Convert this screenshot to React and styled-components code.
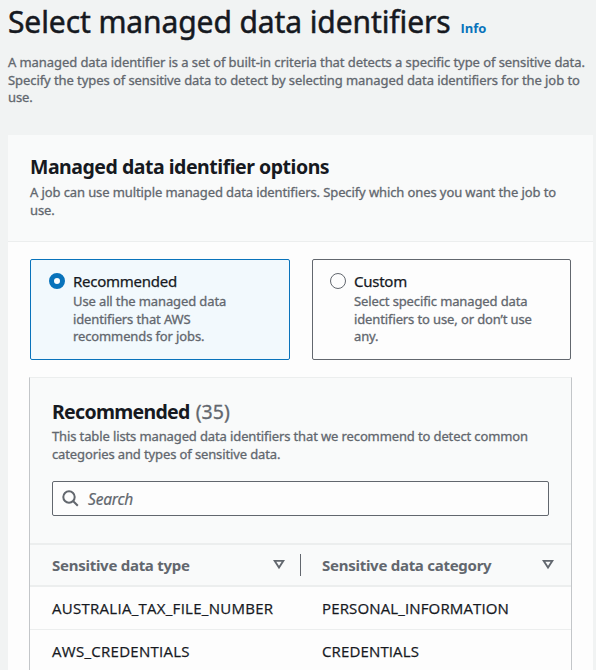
import React from "react";
import styled, { createGlobalStyle } from "styled-components";

const prose = '"Noto Sans", "Open Sans", sans-serif';
const caps = '"Open Sans", "Noto Sans", sans-serif';
const color = {
  page: "#f1f3f3",
  surface: "#fdfdfd",
  header: "#f9fafa",
  line: "#eceeee",
  edge: "#c3c6c9",
  ink: "#16191f",
  muted: "#62676e",
  blue: "#0973bb",
};

const GlobalStyle = createGlobalStyle`
  *, *::before, *::after { box-sizing: border-box; }
  html, body { margin: 0; background: ${color.page}; }
  body { font-family: ${prose}; color: ${color.ink}; overflow: hidden; }
  h1, h2, p { margin: 0; }
`;

const Page = styled.main`
  width: 596px;
  height: 670px;
  padding: 1px 2px 0 8px;
  overflow: hidden;
`;

const PageHeader = styled.header`
  height: 134px;
`;

const TitleRow = styled.div`
  display: flex;
  align-items: baseline;
  gap: 10px;
  height: 53px;
`;

const Title = styled.h1`
  font-size: 30px;
  line-height: 42px;
  font-weight: 400;
  letter-spacing: -0.1px;
  -webkit-text-stroke: 0.5px currentColor;
  white-space: nowrap;
`;

const InfoLink = styled.a`
  font: 700 13px/18px ${caps};
  letter-spacing: -0.1px;
  color: ${color.blue};
`;

const Description = styled.p`
  font-size: 13px;
  line-height: 17.6px;
  letter-spacing: ${(p) => p.$tracking}px;
  color: ${color.muted};
  -webkit-text-stroke: 0.3px currentColor;
  white-space: pre-line;
`;

const Card = styled.section`
  width: 585px;
  height: 560px;
  background: ${color.surface};
`;

const CardHeader = styled.header`
  height: 107px;
  padding: 19px 22px 0;
  background: ${color.header};
  border-bottom: 1px solid ${color.line};
`;

const Heading = styled.h2`
  font-size: 19.5px;
  line-height: 26px;
  height: ${(p) => p.$height}px;
  font-weight: 700;
  letter-spacing: ${(p) => p.$tracking}px;
  white-space: nowrap;
`;

const Counter = styled.span`
  margin-left: 6px;
  font-weight: 400;
  letter-spacing: 0.1px;
  color: ${color.muted};
  -webkit-text-stroke: 0.3px currentColor;
`;

const CardBody = styled.div`
  padding: 17px 21px 0;
`;

const Tiles = styled.div`
  display: grid;
  grid-template-columns: 260px 259px;
  gap: 22px;
  padding-left: 1px;
`;

const Tile = styled.label`
  display: flex;
  gap: 8px;
  height: 101px;
  padding: 12px 0 0 ${(p) => (p.$selected ? 18 : 17)}px;
  border: 1px solid ${(p) => (p.$selected ? color.blue : color.muted)};
  border-radius: 2px;
  background: ${(p) => (p.$selected ? "#f2f9fd" : color.surface)};
`;

const Radio = styled.span`
  flex: none;
  width: 16px;
  height: 16px;
  margin-top: 1px;
  border: ${(p) => (p.$selected ? `5px solid ${color.blue}` : `1px solid ${color.muted}`)};
  border-radius: 50%;
  background: ${color.surface};
`;

const TileLabel = styled.div`
  height: 21px;
  font-size: 15px;
  line-height: 18px;
  letter-spacing: -0.25px;
  -webkit-text-stroke: 0.25px currentColor;
`;

const TablePanel = styled.section`
  width: 543px;
  height: 320px;
  margin-top: 17px;
  border: 1px solid ${color.edge};
  border-top-color: ${color.line};
`;

const TableTools = styled.header`
  height: 165px;
  padding: 21px 22px 0;
  background: ${color.header};
`;

const SearchBox = styled.div`
  display: flex;
  align-items: center;
  gap: 9px;
  height: 35px;
  margin-top: 18px;
  padding-left: 9px;
  border: 1px solid ${color.muted};
  border-radius: 2px;
  background: ${color.surface};
  color: ${color.muted};
  font-size: 15.5px;
  font-style: italic;
  letter-spacing: -0.2px;
  -webkit-text-stroke: 0.2px currentColor;
`;

const Row = styled.div`
  display: grid;
  grid-template-columns: 271px 1fr;
  align-items: center;
  height: 43px;
  border-bottom: 1px solid ${color.line};
`;

const HeaderRow = styled(Row)`
  height: 44px;
  border-top: 2px solid ${color.line};
  border-bottom-width: 2px;
  background: ${color.header};
`;

const HeaderCell = styled.div`
  display: flex;
  align-items: center;
  justify-content: space-between;
  height: 22px;
  padding: 0 ${(p) => (p.$divided ? 15 : 16)}px 0 ${(p) => (p.$divided ? 22 : 21)}px;
  border-right: 1px solid ${(p) => (p.$divided ? color.muted : "transparent")};
  font-size: 15px;
  font-weight: 700;
  letter-spacing: -0.27px;
  color: ${color.muted};
`;

const Cell = styled.div`
  padding-left: ${(p) => p.$inset}px;
  font-family: ${caps};
  font-size: 15px;
  line-height: 20px;
  letter-spacing: ${(p) => p.$tracking}px;
  -webkit-text-stroke: 0.25px currentColor;
`;

function SearchIcon() {
  return (
    <svg width="17" height="17" viewBox="0 0 17 17" fill="none" stroke="currentColor" strokeWidth="2">
      <circle cx="7" cy="7" r="5.7" />
      <path d="M11 11l4.8 4.8" />
    </svg>
  );
}

function SortIcon() {
  return (
    <svg width="12" height="12" viewBox="0 0 12 12" fill="none" stroke="currentColor" strokeWidth="1.8">
      <path d="M1.6 1.8h8.8L6 8.6z" />
    </svg>
  );
}

const rows = [
  { type: "AUSTRALIA_TAX_FILE_NUMBER", category: "PERSONAL_INFORMATION" },
  { type: "AWS_CREDENTIALS", category: "CREDENTIALS" },
];

const options = [
  {
    label: "Recommended",
    text: "Use all the managed data\nidentifiers that AWS\nrecommends for jobs.",
    selected: true,
  },
  {
    label: "Custom",
    text: "Select specific managed data\nidentifiers to use, or don’t use\nany.",
    selected: false,
  },
];

export default function App() {
  return (
    <Page>
      <GlobalStyle />
      <PageHeader>
        <TitleRow>
          <Title>Select managed data identifiers</Title>
          <InfoLink>Info</InfoLink>
        </TitleRow>
        <Description $tracking={-0.075}>
          {"A managed data identifier is a set of built-in criteria that detects a specific type of sensitive data.\nSpecify the types of sensitive data to detect by selecting managed data identifiers for the job to\nuse."}
        </Description>
      </PageHeader>
      <Card>
        <CardHeader>
          <Heading $tracking={-0.48} $height={30}>
            Managed data identifier options
          </Heading>
          <Description $tracking={-0.105}>
            {"A job can use multiple managed data identifiers. Specify which ones you want the job to\nuse."}
          </Description>
        </CardHeader>
        <CardBody>
          <Tiles>
            {options.map((o) => (
              <Tile key={o.label} $selected={o.selected}>
                <Radio $selected={o.selected} />
                <div>
                  <TileLabel>{o.label}</TileLabel>
                  <Description $tracking={-0.12}>{o.text}</Description>
                </div>
              </Tile>
            ))}
          </Tiles>
          <TablePanel>
            <TableTools>
              <Heading $tracking={-0.7} $height={29}>
                Recommended<Counter>(35)</Counter>
              </Heading>
              <Description $tracking={-0.12}>
                {"This table lists managed data identifiers that we recommend to detect common\ncategories and types of sensitive data."}
              </Description>
              <SearchBox>
                <SearchIcon />
                <span>Search</span>
              </SearchBox>
            </TableTools>
            <HeaderRow>
              <HeaderCell $divided>
                Sensitive data type
                <SortIcon />
              </HeaderCell>
              <HeaderCell>
                Sensitive data category
                <SortIcon />
              </HeaderCell>
            </HeaderRow>
            {rows.map((r) => (
              <Row key={r.type}>
                <Cell $tracking={0.28} $inset={22}>{r.type}</Cell>
                <Cell $tracking={0.14} $inset={21}>{r.category}</Cell>
              </Row>
            ))}
          </TablePanel>
        </CardBody>
      </Card>
    </Page>
  );
}
